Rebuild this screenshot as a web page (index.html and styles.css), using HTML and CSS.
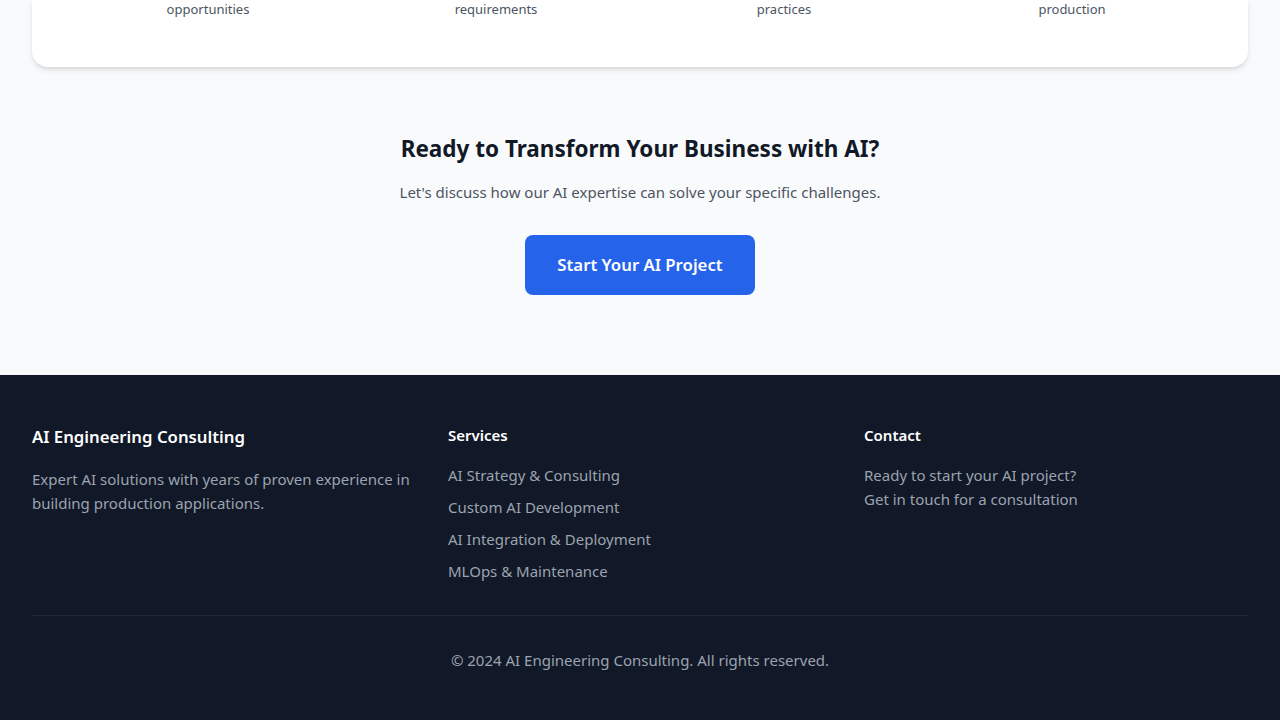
FILE: index.html
```html
<!DOCTYPE html>
<html lang="en">
<head>
<meta charset="utf-8">
<title>AI Engineering Consulting</title>
<link rel="stylesheet" href="styles.css">
</head>
<body>
<section class="process">
  <div class="card">
    <div class="steps">
      <p class="step">opportunities</p>
      <p class="step">requirements</p>
      <p class="step">practices</p>
      <p class="step">production</p>
    </div>
  </div>
</section>
<section class="cta">
  <h2 class="cta-title">Ready to Transform Your Business with AI?</h2>
  <p class="cta-text">Let's discuss how our AI expertise can solve your specific challenges.</p>
  <a class="cta-button" href="#">Start Your AI Project</a>
</section>
<footer class="footer">
  <div class="footer-grid">
    <div class="footer-col">
      <h3 class="brand">AI Engineering Consulting</h3>
      <p class="footer-text">Expert AI solutions with years of proven experience in building production applications.</p>
    </div>
    <div class="footer-col">
      <h4 class="footer-heading">Services</h4>
      <ul class="footer-list">
        <li>AI Strategy &amp; Consulting</li>
        <li>Custom AI Development</li>
        <li>AI Integration &amp; Deployment</li>
        <li>MLOps &amp; Maintenance</li>
      </ul>
    </div>
    <div class="footer-col">
      <h4 class="footer-heading">Contact</h4>
      <p class="footer-text">Ready to start your AI project?<br>Get in touch for a consultation</p>
    </div>
  </div>
  <div class="footer-bottom">
    <p class="copyright">© 2024 AI Engineering Consulting. All rights reserved.</p>
  </div>
</footer>
</body>
</html>
```

FILE: styles.css
```css
* { box-sizing: border-box; }
html, body { margin: 0; padding: 0; }
body {
  font-family: "Noto Sans", "Open Sans", sans-serif;
  background: #f9fafb;
  color: #111827;
}
p, h2, h3, h4, ul { margin: 0; padding: 0; }

.process { padding: 0 32px; }
.card {
  background: #ffffff;
  border-radius: 0 0 16px 16px;
  box-shadow: 0 4px 6px -1px rgba(0,0,0,0.1), 0 2px 4px -2px rgba(0,0,0,0.1);
  padding: 0 32px 48px;
  margin-top: -1px;
}
.steps {
  display: grid;
  grid-template-columns: repeat(4, 1fr);
}
.step {
  text-align: center;
  font-size: 13px;
  line-height: 20px;
  color: #4b5563;
}

.cta {
  padding: 65px 32px 80px;
  text-align: center;
  display: flex;
  flex-direction: column;
  align-items: center;
}
.cta-title {
  font-size: 22.5px;
  line-height: 34px;
  font-weight: 700;
  color: #111827;
  margin-bottom: 14px;
}
.cta-text {
  font-size: 15px;
  line-height: 24px;
  color: #4b5563;
  margin-bottom: 31px;
}
.cta-button {
  display: inline-block;
  background: #2563eb;
  color: #ffffff;
  text-decoration: none;
  font-size: 16.75px;
  line-height: 28px;
  font-weight: 600;
  padding: 16px 32px;
  border-radius: 8px;
}

.footer {
  background: #111827;
  padding: 48px 32px;
}
.footer-grid {
  display: grid;
  grid-template-columns: repeat(3, 1fr);
  gap: 32px;
}
.brand {
  font-size: 16.75px;
  line-height: 28px;
  font-weight: 600;
  color: #ffffff;
  margin-bottom: 16px;
}
.footer-heading {
  font-size: 15px;
  line-height: 24px;
  font-weight: 600;
  color: #ffffff;
  margin-bottom: 16px;
}
.footer-text {
  font-size: 15px;
  line-height: 24px;
  color: #9ca3af;
}
.footer-list {
  list-style: none;
  display: flex;
  flex-direction: column;
  gap: 8px;
  font-size: 15px;
  line-height: 24px;
  color: #9ca3af;
}
.footer-bottom {
  margin-top: 32px;
  padding-top: 32px;
  border-top: 1px solid #1f2937;
  text-align: center;
}
.copyright {
  font-size: 15px;
  line-height: 24px;
  color: #9ca3af;
}
```
